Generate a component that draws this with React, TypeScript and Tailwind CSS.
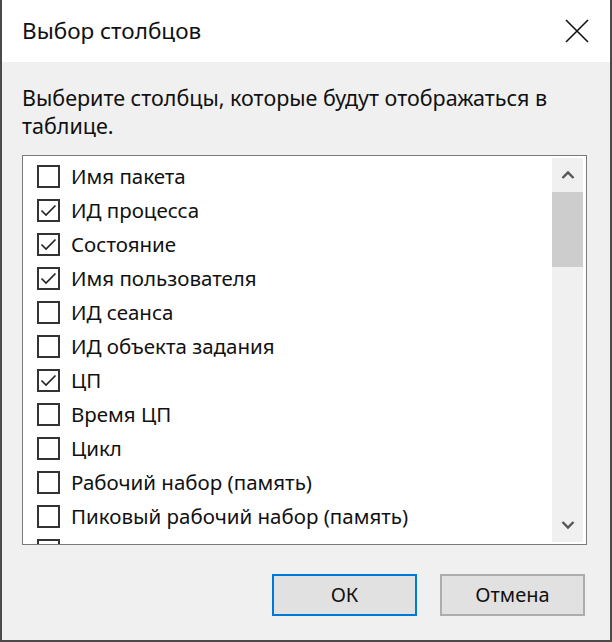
import React from 'react';

const columns: { label: string; checked: boolean }[] = [
  { label: 'Имя пакета', checked: false },
  { label: 'ИД процесса', checked: true },
  { label: 'Состояние', checked: true },
  { label: 'Имя пользователя', checked: true },
  { label: 'ИД сеанса', checked: false },
  { label: 'ИД объекта задания', checked: false },
  { label: 'ЦП', checked: true },
  { label: 'Время ЦП', checked: false },
  { label: 'Цикл', checked: false },
  { label: 'Рабочий набор (память)', checked: false },
  { label: 'Пиковый рабочий набор (память)', checked: false },
  // next row is cut off by the list edge, only the box top shows
  { label: '', checked: false },
];

function CheckBox({ checked }: { checked: boolean }) {
  return (
    <div className="w-[23px] h-[23px] shrink-0 border-2 border-[#333] bg-white flex items-center justify-center">
      {checked && (
        <svg width="19" height="19" viewBox="0 0 19 19">
          <path d="M2.5 9.5 L7 14 L16.5 4.5" fill="none" stroke="#222" strokeWidth="1.6" />
        </svg>
      )}
    </div>
  );
}

export default function App() {
  return (
    <div
      className="w-[612px] h-[642px] flex flex-col bg-[#f0f0f0] border-l-2 border-r-2 border-b-2 border-[#4a4a4a] text-[#111]"
      style={{ fontFamily: '"Noto Sans", "Open Sans", sans-serif' }}
    >
      {/* title bar */}
      <div className="h-[62px] shrink-0 bg-white flex items-center justify-between pl-[20px] pr-[21px]">
        <span className="text-[22.5px] leading-none">Выбор столбцов</span>
        <svg width="24" height="24" viewBox="0 0 24 24">
          <path d="M1 1 L23 23 M23 1 L1 23" stroke="#111" strokeWidth="1.6" />
        </svg>
      </div>

      <div className="flex-1 flex flex-col px-[20px]">
        <p className="mt-[22px] text-[21.5px] leading-[28px] pr-[16px]">
          Выберите столбцы, которые будут отображаться в таблице.
        </p>

        {/* list */}
        <div className="mt-[15px] h-[390px] mr-[3px] border border-[#7a7a7a] bg-white flex overflow-hidden">
          <div className="flex-1 pt-[3px] overflow-hidden">
            {columns.map((c, i) => (
              <div key={i} className="h-[34px] flex items-center pl-[14px] gap-[11px]">
                <CheckBox checked={c.checked} />
                {c.label && <span className="text-[20.5px] leading-none whitespace-nowrap">{c.label}</span>}
              </div>
            ))}
          </div>
          <div className="w-[31px] my-[2px] mr-[3px] bg-[#f0f0f0] flex flex-col">
            <div className="h-[34px] flex items-center justify-center">
              <svg width="14" height="10" viewBox="0 0 14 10">
                <path d="M1.5 8 L7 2.5 L12.5 8" fill="none" stroke="#555" strokeWidth="2.4" />
              </svg>
            </div>
            <div className="h-[75px] bg-[#cdcdcd]" />
            <div className="flex-1" />
            <div className="h-[34px] flex items-center justify-center">
              <svg width="14" height="10" viewBox="0 0 14 10">
                <path d="M1.5 2 L7 7.5 L12.5 2" fill="none" stroke="#555" strokeWidth="2.4" />
              </svg>
            </div>
          </div>
        </div>

        {/* buttons */}
        <div className="mt-[29px] flex justify-end gap-[23px] pr-[5px]">
          <button className="w-[145px] h-[42px] bg-[#e1e1e1] border-2 border-[#0078d7] text-[20px] leading-none">
            ОК
          </button>
          <button className="w-[145px] h-[42px] bg-[#e1e1e1] border-2 border-[#adadad] text-[20px] leading-none">
            Отмена
          </button>
        </div>
      </div>
    </div>
  );
}
